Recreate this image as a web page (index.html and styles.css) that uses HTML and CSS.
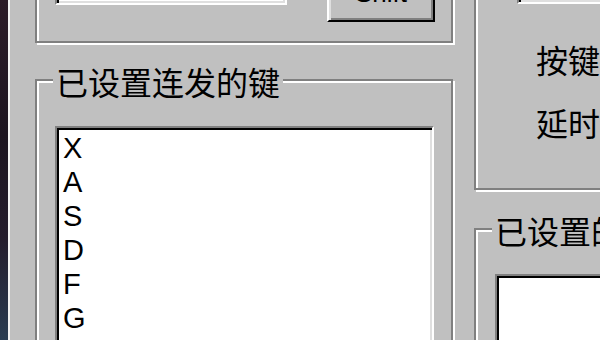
FILE: index.html
```html
<!DOCTYPE html>
<html lang="zh-CN">
<head>
    <meta charset="UTF-8">
    <title>连发设置</title>
    <link rel="stylesheet" href="styles.css">
</head>
<body>
    <div class="screen">
        <div class="desktop"></div>
        <div class="window">
            <div class="client">
                <div class="col col-left">
                    <div class="group group-top">
                        <div class="field field-name"></div>
                        <div class="button">Shift</div>
                    </div>
                    <div class="group group-keys">
                        <div class="caption">已设置连发的键</div>
                        <ul class="listbox">
                            <li>X</li>
                            <li>A</li>
                            <li>S</li>
                            <li>D</li>
                            <li>F</li>
                            <li>G</li>
                        </ul>
                    </div>
                </div>
                <div class="col col-right">
                    <div class="group group-settings">
                        <div class="field field-key"></div>
                        <div class="label label-key">按键</div>
                        <div class="label label-delay">延时</div>
                    </div>
                    <div class="group group-list">
                        <div class="caption">已设置的键</div>
                        <ul class="listbox listbox-right"></ul>
                    </div>
                </div>
            </div>
        </div>
    </div>
</body>
</html>
```

FILE: styles.css
```css
* {
    box-sizing: border-box;
}

body {
    margin: 0;
    background: #c0c0c0;
    font-family: "Liberation Sans", Arial, sans-serif;
    color: #000;
}

.screen {
    display: flex;
    width: 600px;
    height: 340px;
    overflow: hidden;
}

.desktop {
    width: 8px;
    flex: none;
    background: linear-gradient(to bottom, #2c1c28, #1c1420 40%, #241c2c 70%, #2a3c52);
}

.window {
    flex: 1;
    min-width: 0;
    overflow: hidden;
    border-left: 2px solid #f2f2f2;
    background: #c0c0c0;
}

.client {
    display: flex;
    gap: 21px;
    padding-left: 25px;
    margin-top: -60px;
}

.col {
    flex: none;
}

.col-left {
    width: 418px;
}

.col-right {
    width: 200px;
}

/* etched group box */
.group {
    border: 2px solid #808080;
    box-shadow: inset 2px 2px 0 #fff, 2px 2px 0 #fff;
}

.group-top {
    height: 103px;
    padding: 18px 0 0 18px;
    display: flex;
    align-items: flex-start;
}

.field {
    background: #fff;
    border: 2px solid;
    border-color: #808080 #fff #fff #808080;
    box-shadow: inset 2px 2px 0 #000, inset -2px -2px 0 #dfdfdf;
}

.field-name {
    width: 232px;
    height: 45px;
}

.button {
    margin-left: 40px;
    width: 108px;
    height: 62px;
    padding-bottom: 14px;
    display: flex;
    align-items: flex-end;
    justify-content: center;
    border: 2px solid;
    border-color: #fff #000 #000 #fff;
    box-shadow: inset 2px 2px 0 #dfdfdf, inset -2px -2px 0 #808080;
    font-size: 26px;
    line-height: 26px;
}

.group-keys {
    margin-top: 36px;
    height: 300px;
}

.caption {
    width: fit-content;
    margin: -18px 0 0 16px;
    padding: 0 3px;
    background: #c0c0c0;
    font-family: "Noto Sans CJK SC", sans-serif;
    font-size: 32px;
    line-height: 36px;
    white-space: nowrap;
}

.listbox {
    list-style: none;
    margin: 27px 0 0 18px;
    padding: 3px 0 0 6px;
    width: 379px;
    height: 300px;
    background: #fff;
    border: 2px solid;
    border-color: #808080 #fff #fff #808080;
    box-shadow: inset 2px 2px 0 #000, inset -2px -2px 0 #dfdfdf;
    font-size: 29px;
    line-height: 34px;
}

.group-settings {
    height: 250px;
    padding-top: 18px;
}

.field-key {
    margin-left: 41px;
    width: 200px;
    height: 44px;
}

.label {
    margin-left: 60px;
    font-family: "Noto Sans CJK SC", sans-serif;
    font-size: 32px;
    line-height: 36px;
    white-space: nowrap;
}

.label-key {
    margin-top: 37px;
}

.label-delay {
    margin-top: 27px;
}

.group-list {
    margin-top: 38px;
    height: 200px;
}

.listbox-right {
    margin: 26px 0 0 19px;
    width: 200px;
}
```
